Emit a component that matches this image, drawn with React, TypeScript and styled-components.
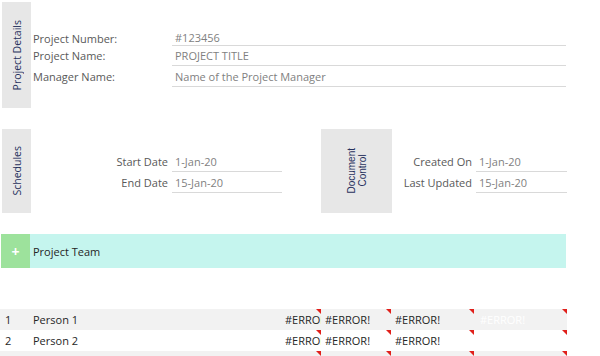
import styled, { createGlobalStyle } from "styled-components";

const GlobalStyle = createGlobalStyle`
  html, body {
    margin: 0;
    padding: 0;
    background: #ffffff;
  }
  body {
    font-family: "Open Sans", "Noto Sans", sans-serif;
    font-size: 11px;
    color: #595959;
  }
`;

type Field = { label: string; value: string };

const details: (Field & { h: number })[] = [
  { label: "Project Number:", value: "#123456", h: 14 },
  { label: "Project Name:", value: "PROJECT TITLE", h: 20 },
  { label: "Manager Name:", value: "Name of the Project Manager", h: 20 },
];

const schedules: Field[] = [
  { label: "Start Date", value: "1-Jan-20" },
  { label: "End Date", value: "15-Jan-20" },
];

const docControl: Field[] = [
  { label: "Created On", value: "1-Jan-20" },
  { label: "Last Updated", value: "15-Jan-20" },
];

type Person = { n: string; name: string; cells: string[]; hidden: boolean };

const team: Person[] = [
  { n: "1", name: "Person 1", cells: ["#ERROR!", "#ERROR!", "#ERROR!", "#ERROR!"], hidden: true },
  { n: "2", name: "Person 2", cells: ["#ERROR!", "#ERROR!", "#ERROR!", ""], hidden: false },
  { n: "", name: "", cells: ["", "", "", ""], hidden: false },
];

const colWidths = [38, 70, 83, 93];
const colPads = [2, 4, 4, 6];

const App = () => {
  return (
    <Page>
      <GlobalStyle />

      <Section>
        <SideTab $height={106}>
          <TabText>Project Details</TabText>
        </SideTab>
        <DetailsGrid>
          {details.map((f) => (
            <DetailRow key={f.label} $h={f.h}>
              <DetailLabel>{f.label}</DetailLabel>
              <DetailValue>{f.value}</DetailValue>
            </DetailRow>
          ))}
        </DetailsGrid>
      </Section>

      <Section $gap={21}>
        <SideTab $height={84}>
          <TabText>Schedules</TabText>
        </SideTab>
        <DateList $labelW={139} $valueW={110} $offset={2}>
          {schedules.map((f) => (
            <DateRow key={f.label}>
              <DateLabel>{f.label}</DateLabel>
              <DateValue>{f.value}</DateValue>
            </DateRow>
          ))}
        </DateList>
        <DocBox>
          <DocText>
            Document
            <br />
            Control
          </DocText>
        </DocBox>
        <DateList $labelW={84} $valueW={91} $offset={0}>
          {docControl.map((f) => (
            <DateRow key={f.label}>
              <DateLabel>{f.label}</DateLabel>
              <DateValue>{f.value}</DateValue>
            </DateRow>
          ))}
        </DateList>
      </Section>

      <TeamBar>
        <PlusBox>+</PlusBox>
        <TeamTitle>Project Team</TeamTitle>
      </TeamBar>

      <Table>
        {team.map((p, i) => (
          <TableRow key={i} $alt={i % 2 === 0}>
            <NumCell>{p.n}</NumCell>
            <NameCell>{p.name}</NameCell>
            {p.cells.map((c, j) => (
              <ErrCell key={j} $w={colWidths[j]} $pad={colPads[j]} $ghost={j === 3 && p.hidden}>
                <ErrText>{c}</ErrText>
                <Flag />
              </ErrCell>
            ))}
          </TableRow>
        ))}
      </Table>
    </Page>
  );
};

const Page = styled.div`
  width: 600px;
  height: 356px;
  overflow: hidden;
  padding-top: 2px;
  box-sizing: border-box;
`;

const Section = styled.div<{ $gap?: number }>`
  display: flex;
  align-items: flex-start;
  margin-left: 2px;
  margin-top: ${(p) => p.$gap ?? 0}px;
`;

const SideTab = styled.div<{ $height: number }>`
  width: 29px;
  height: ${(p) => p.$height}px;
  background: #e7e7e7;
  display: flex;
  align-items: center;
  justify-content: center;
  flex-shrink: 0;
`;

const TabText = styled.span`
  writing-mode: vertical-rl;
  transform: rotate(180deg);
  color: #27325e;
  font-size: 10.5px;
  white-space: nowrap;
`;

const DetailsGrid = styled.div`
  margin-top: 28px;
  margin-left: 2px;
  display: flex;
  flex-direction: column;
`;

const DetailRow = styled.div<{ $h: number }>`
  display: grid;
  grid-template-columns: 139px 394px;
  height: ${(p) => p.$h + 1}px;
`;

const DetailLabel = styled.div`
  display: flex;
  align-items: center;
  color: #595959;
  white-space: nowrap;
`;

const DetailValue = styled.div`
  display: flex;
  align-items: center;
  padding-left: 3px;
  color: #7f7f7f;
  border-bottom: 1px solid #d9d9d9;
  white-space: nowrap;
`;

const DateList = styled.div<{ $labelW: number; $valueW: number; $offset: number }>`
  margin-top: 22px;
  margin-left: ${(p) => p.$offset}px;
  display: grid;
  grid-template-columns: ${(p) => p.$labelW}px ${(p) => p.$valueW}px;
  grid-auto-rows: 21px;
`;

const DateRow = styled.div`
  display: contents;
`;

const DateLabel = styled.div`
  display: flex;
  align-items: center;
  justify-content: flex-end;
  padding-right: 4px;
  color: #595959;
  white-space: nowrap;
`;

const DateValue = styled.div`
  display: flex;
  align-items: center;
  padding-left: 3px;
  color: #7f7f7f;
  border-bottom: 1px solid #d9d9d9;
  white-space: nowrap;
`;

const DocBox = styled.div`
  width: 71px;
  height: 84px;
  margin-left: 39px;
  background: #e7e7e7;
  display: flex;
  align-items: center;
  justify-content: center;
  flex-shrink: 0;
`;

const DocText = styled.span`
  writing-mode: vertical-rl;
  transform: rotate(180deg);
  color: #27325e;
  font-family: "Liberation Sans", Arial, sans-serif;
  font-size: 10px;
  line-height: 11px;
  text-align: center;
  white-space: nowrap;
`;

const TeamBar = styled.div`
  display: flex;
  height: 34px;
  width: 565px;
  margin-top: 21px;
  margin-left: 1px;
  background: #c5f5ee;
`;

const PlusBox = styled.div`
  width: 29px;
  display: flex;
  align-items: center;
  justify-content: center;
  background: #9de29c;
  color: #ffffff;
  font-size: 14px;
  font-weight: 700;
`;

const TeamTitle = styled.div`
  display: flex;
  align-items: center;
  padding-left: 3px;
  color: #262626;
  font-size: 11px;
`;

const Table = styled.div`
  margin-top: 41px;
  display: flex;
  flex-direction: column;
  width: 567px;
`;

const TableRow = styled.div<{ $alt: boolean }>`
  display: flex;
  height: 21px;
  background: ${(p) => (p.$alt ? "#f2f2f2" : "#ffffff")};
  color: #262626;
`;

const NumCell = styled.div`
  width: 30px;
  padding-left: 5px;
  box-sizing: border-box;
  display: flex;
  align-items: center;
`;

const NameCell = styled.div`
  width: 253px;
  padding-left: 3px;
  box-sizing: border-box;
  display: flex;
  align-items: center;
`;

const ErrCell = styled.div<{ $w: number; $pad: number; $ghost: boolean }>`
  position: relative;
  width: ${(p) => p.$w}px;
  padding-left: ${(p) => p.$pad}px;
  box-sizing: border-box;
  display: flex;
  align-items: center;
  overflow: hidden;
  color: ${(p) => (p.$ghost ? "#ffffff" : "#262626")};
`;

const ErrText = styled.span`
  white-space: nowrap;
  overflow: hidden;
  text-overflow: clip;
  min-width: 0;
`;

const Flag = styled.span`
  position: absolute;
  top: 0;
  right: 0;
  width: 0;
  height: 0;
  border-top: 5px solid #e0201b;
  border-left: 5px solid transparent;
`;

export default App;
